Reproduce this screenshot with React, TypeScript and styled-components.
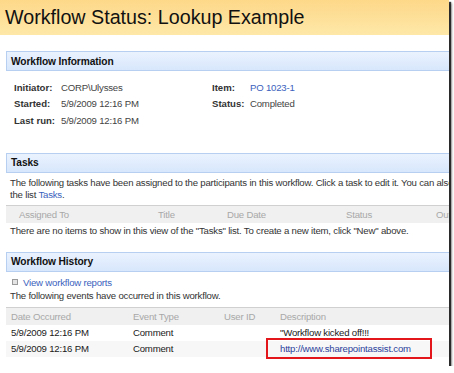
import styled, { createGlobalStyle } from 'styled-components';

const GlobalStyle = createGlobalStyle`
  html, body {
    margin: 0;
    padding: 0;
    background: #ffffff;
  }
  body {
    font-family: "Liberation Sans", Arial, sans-serif;
    font-size: 9.6px;
    letter-spacing: -0.2px;
    color: #222;
  }
`;

const Frame = styled.div`
  width: 449px;
  height: 366px;
  overflow: hidden;
  background: #fff;
  box-shadow: 2px 2px 1px rgba(0, 0, 0, 0.75), 3px 3px 2px rgba(0, 0, 0, 0.35);
`;

const TitleBar = styled.div`
  height: 35px;
  display: flex;
  align-items: center;
  padding-left: 5px;
  background: linear-gradient(to bottom, #fdd889, #fee8a8);
  font-size: 19.7px;
  letter-spacing: 0;
  color: #111;
`;

const Section = styled.section<{ top: number }>`
  margin-top: ${({ top }) => top}px;
  margin-left: 6px;
`;

const Header = styled.div`
  height: 18px;
  display: flex;
  align-items: center;
  padding-left: 4px;
  border: 1px solid #b7cff0;
  border-right: none;
  background: linear-gradient(to bottom, #eaf2fe, #d8e7fc);
  font-weight: bold;
  font-size: 10.2px;
  letter-spacing: -0.1px;
  color: #111;
`;

const InfoGrid = styled.div`
  display: grid;
  grid-template-columns: 47px 151px 38px 1fr;
  grid-auto-rows: 16.5px;
  align-items: center;
  padding: 8px 0 0 8px;
`;

const Label = styled.span`
  font-weight: bold;
  letter-spacing: 0;
  color: #333;
`;

const Value = styled.span<{ link?: boolean }>`
  color: ${({ link }) => (link ? '#3b62bd' : '#444')};
`;

const Text = styled.p<{ top?: number }>`
  margin: ${({ top }) => top ?? 0}px 0 0;
  padding-left: 4px;
  line-height: 12px;
  white-space: nowrap;
  color: #333;
`;

const Link = styled.a`
  color: #3b62bd;
  text-decoration: none;
`;

const Spacer = styled.div<{ h: number }>`
  height: ${({ h }) => h}px;
`;

const ColumnBar = styled.div<{ cols: string; pad: number }>`
  display: grid;
  grid-template-columns: ${({ cols }) => cols};
  align-items: center;
  height: 17px;
  padding-left: ${({ pad }) => pad}px;
  border-top: 1px solid #d0d0d0;
  background: #f0f0f0;
  color: #a8a8a8;
  white-space: nowrap;
`;

const Row = styled.div<{ cols: string; pad: number; shade?: boolean }>`
  display: grid;
  grid-template-columns: ${({ cols }) => cols};
  align-items: center;
  height: 16px;
  padding-left: ${({ pad }) => pad}px;
  background: ${({ shade }) => (shade ? '#f7f7f7' : '#fff')};
  color: #1a1a1a;
  white-space: nowrap;
`;

const Bullet = styled.span`
  display: inline-block;
  width: 4px;
  height: 4px;
  margin: 0 5px 1px 2px;
  border: 1px solid #9a9a9a;
  background: #e4e4e4;
  vertical-align: middle;
`;

const Marked = styled.span`
  position: relative;
  color: #2b3f9c;
  &::after {
    content: '';
    position: absolute;
    left: -14px;
    right: -21px;
    top: -5px;
    bottom: -5px;
    border: 2px solid #e3161b;
  }
`;

const taskCols = '139px 69px 119px 90px 1fr';
const historyCols = '122px 91px 56px 1fr';

export default function App() {
  return (
    <>
      <GlobalStyle />
      <Frame>
        <TitleBar>Workflow Status: Lookup Example</TitleBar>

        <Section top={16}>
          <Header>Workflow Information</Header>
          <InfoGrid>
            <Label>Initiator:</Label>
            <Value>CORP\Ulysses</Value>
            <Label>Item:</Label>
            <Value link>PO 1023-1</Value>
            <Label>Started:</Label>
            <Value>5/9/2009 12:16 PM</Value>
            <Label>Status:</Label>
            <Value>Completed</Value>
            <Label>Last run:</Label>
            <Value>5/9/2009 12:16 PM</Value>
          </InfoGrid>
        </Section>

        <Section top={24}>
          <Header>Tasks</Header>
          <Text top={4}>
            The following tasks have been assigned to the participants in this workflow. Click a task to edit it. You can also view these tasks in
          </Text>
          <Text>
            the list <Link>Tasks</Link>.
          </Text>
          <Spacer h={4} />
          <ColumnBar cols={taskCols} pad={13}>
            <span>Assigned To</span>
            <span>Title</span>
            <span>Due Date</span>
            <span>Status</span>
            <span>Outcome</span>
          </ColumnBar>
          <Text top={2}>
            There are no items to show in this view of the "Tasks" list. To create a new item, click "New" above.
          </Text>
        </Section>

        <Section top={15}>
          <Header>Workflow History</Header>
          <Text top={5}>
            <Bullet />
            <Link>View workflow reports</Link>
          </Text>
          <Text top={1}>The following events have occurred in this workflow.</Text>
          <Spacer h={5} />
          <ColumnBar cols={historyCols} pad={5}>
            <span>Date Occurred</span>
            <span>Event Type</span>
            <span>User ID</span>
            <span>Description</span>
          </ColumnBar>
          <Row cols={historyCols} pad={5}>
            <span>5/9/2009 12:16 PM</span>
            <span>Comment</span>
            <span />
            <span>"Workflow kicked off!!!</span>
          </Row>
          <Row cols={historyCols} pad={5} shade>
            <span>5/9/2009 12:16 PM</span>
            <span>Comment</span>
            <span />
            <span>
              <Marked>http://www.sharepointassist.com</Marked>
            </span>
          </Row>
        </Section>
      </Frame>
    </>
  );
}
